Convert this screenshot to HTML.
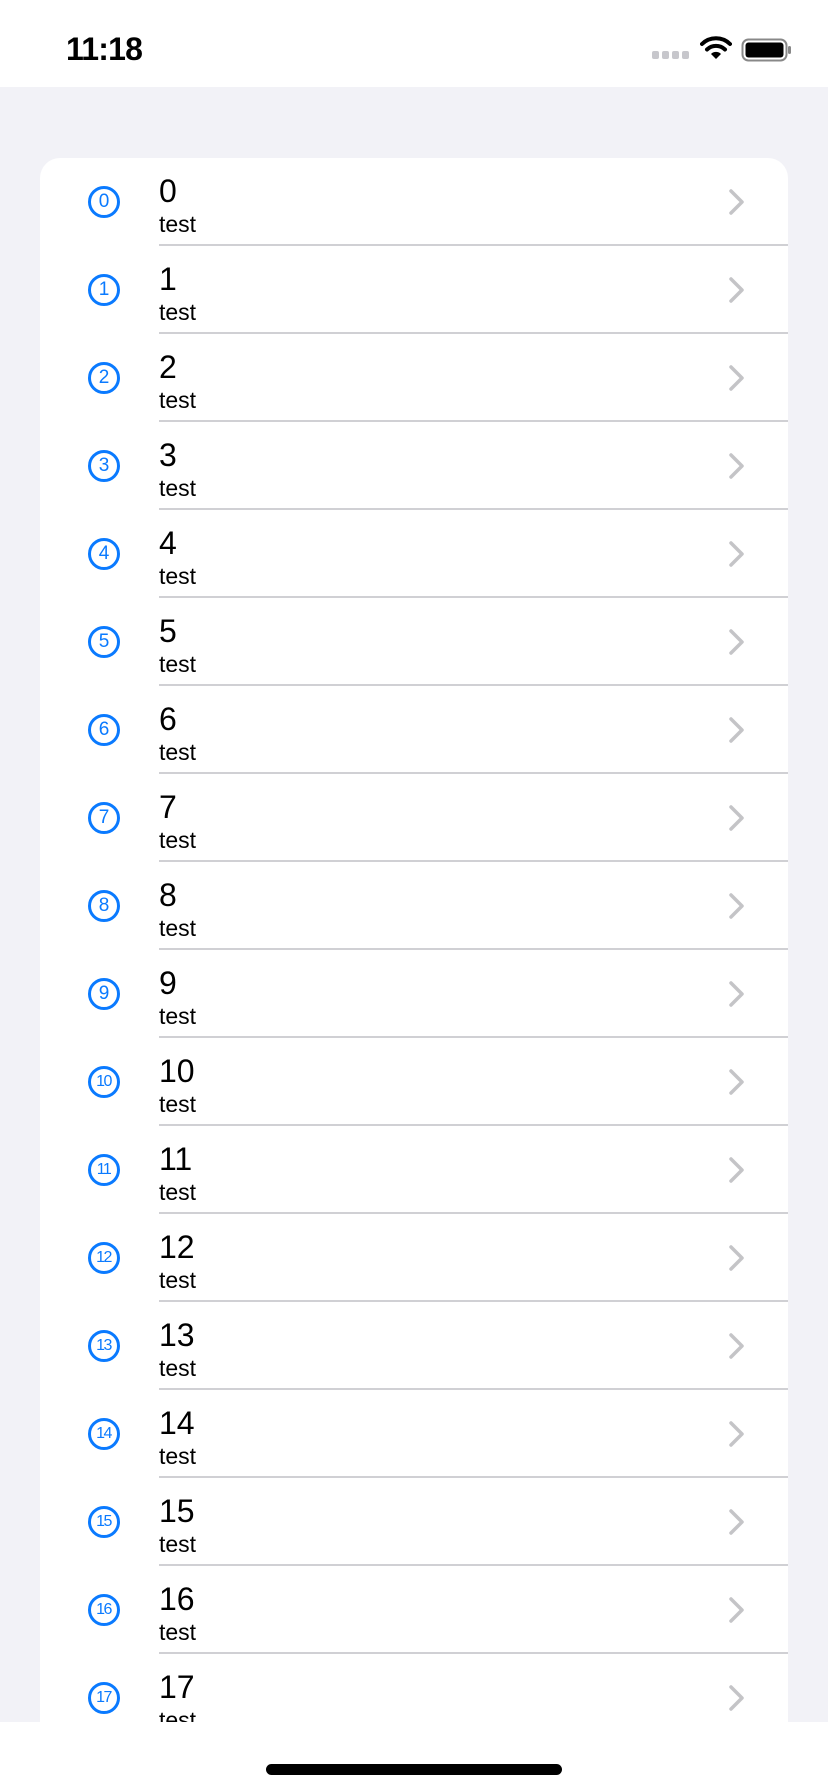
<!DOCTYPE html>
<html><head><meta charset="utf-8"><style>
*{margin:0;padding:0;box-sizing:border-box}
body{width:828px;height:1792px;overflow:hidden;background:#f2f2f7;font-family:"Liberation Sans",sans-serif;position:relative}
.sb{position:absolute;left:0;top:0;width:828px;height:87px;background:#fff}
.time{position:absolute;left:66px;top:31px;font-size:32px;font-weight:bold;letter-spacing:-0.8px}
.card{position:absolute;left:40px;top:158px;width:748px;height:1564px;background:#fff;border-radius:20px 20px 0 0;overflow:hidden}
.row{position:absolute;left:0;width:748px;height:88px}
.ic{position:absolute;left:48px;top:28px;width:32px;height:32px;border:3px solid #0a7aff;border-radius:50%;color:#0a7aff;font-size:19px;text-align:center;line-height:26px}
.ic.s{font-size:16px;letter-spacing:-1.5px;text-indent:-1px}
.t{position:absolute;left:119px;top:15px;font-size:32px;color:#000}
.st{position:absolute;left:119px;top:53px;font-size:23px;color:#000}
.sep{position:absolute;left:119px;right:0;bottom:0;height:2px;background:#d0d0d4}
.ch{position:absolute;left:688px;top:31px}
.bot{position:absolute;left:0;top:1722px;width:828px;height:70px;background:#fff}
.home{position:absolute;left:266px;top:1764px;width:296px;height:11px;border-radius:6px;background:#000}
</style></head><body>
<div class="sb">
<div class="time">11:18</div>
<svg style="position:absolute;left:652px;top:50px" width="40" height="10"><rect x="0" y="1" width="7" height="8" rx="2" fill="#c7c7cc"/><rect x="10" y="1" width="7" height="8" rx="2" fill="#c7c7cc"/><rect x="20" y="1" width="7" height="8" rx="2" fill="#c7c7cc"/><rect x="30" y="1" width="7" height="8" rx="2" fill="#c7c7cc"/></svg>
<svg style="position:absolute;left:700px;top:36px" width="32" height="24" viewBox="0 0 32 24"><path d="M2 8 A20 20 0 0 1 30 8" stroke="#000" stroke-width="4" fill="none" stroke-linecap="round"/><path d="M7 13.5 A13 13 0 0 1 25 13.5" stroke="#000" stroke-width="4" fill="none" stroke-linecap="round"/><path d="M11 18 L16 23 L21 18 A7 7 0 0 0 11 18Z" fill="#000"/></svg>
<svg style="position:absolute;left:741px;top:38px" width="52" height="24"><rect x="1.5" y="1.5" width="44" height="21" rx="6" fill="none" stroke="#888" stroke-width="2"/><rect x="4.5" y="4.5" width="38" height="15" rx="3" fill="#000"/><rect x="47" y="8" width="3" height="8" rx="1.5" fill="#888"/></svg>
</div>
<div class="card">
<div class="row" style="top:0"><div class="ic">0</div><div class="t">0</div><div class="st">test</div><svg class="ch" width="18" height="26"><path d="M3 2 L14 13 L3 24" stroke="#c4c4c7" stroke-width="3.5" fill="none" stroke-linecap="round" stroke-linejoin="round"/></svg><div class="sep"></div></div>
<div class="row" style="top:88px"><div class="ic">1</div><div class="t">1</div><div class="st">test</div><svg class="ch" width="18" height="26"><path d="M3 2 L14 13 L3 24" stroke="#c4c4c7" stroke-width="3.5" fill="none" stroke-linecap="round" stroke-linejoin="round"/></svg><div class="sep"></div></div>
<div class="row" style="top:176px"><div class="ic">2</div><div class="t">2</div><div class="st">test</div><svg class="ch" width="18" height="26"><path d="M3 2 L14 13 L3 24" stroke="#c4c4c7" stroke-width="3.5" fill="none" stroke-linecap="round" stroke-linejoin="round"/></svg><div class="sep"></div></div>
<div class="row" style="top:264px"><div class="ic">3</div><div class="t">3</div><div class="st">test</div><svg class="ch" width="18" height="26"><path d="M3 2 L14 13 L3 24" stroke="#c4c4c7" stroke-width="3.5" fill="none" stroke-linecap="round" stroke-linejoin="round"/></svg><div class="sep"></div></div>
<div class="row" style="top:352px"><div class="ic">4</div><div class="t">4</div><div class="st">test</div><svg class="ch" width="18" height="26"><path d="M3 2 L14 13 L3 24" stroke="#c4c4c7" stroke-width="3.5" fill="none" stroke-linecap="round" stroke-linejoin="round"/></svg><div class="sep"></div></div>
<div class="row" style="top:440px"><div class="ic">5</div><div class="t">5</div><div class="st">test</div><svg class="ch" width="18" height="26"><path d="M3 2 L14 13 L3 24" stroke="#c4c4c7" stroke-width="3.5" fill="none" stroke-linecap="round" stroke-linejoin="round"/></svg><div class="sep"></div></div>
<div class="row" style="top:528px"><div class="ic">6</div><div class="t">6</div><div class="st">test</div><svg class="ch" width="18" height="26"><path d="M3 2 L14 13 L3 24" stroke="#c4c4c7" stroke-width="3.5" fill="none" stroke-linecap="round" stroke-linejoin="round"/></svg><div class="sep"></div></div>
<div class="row" style="top:616px"><div class="ic">7</div><div class="t">7</div><div class="st">test</div><svg class="ch" width="18" height="26"><path d="M3 2 L14 13 L3 24" stroke="#c4c4c7" stroke-width="3.5" fill="none" stroke-linecap="round" stroke-linejoin="round"/></svg><div class="sep"></div></div>
<div class="row" style="top:704px"><div class="ic">8</div><div class="t">8</div><div class="st">test</div><svg class="ch" width="18" height="26"><path d="M3 2 L14 13 L3 24" stroke="#c4c4c7" stroke-width="3.5" fill="none" stroke-linecap="round" stroke-linejoin="round"/></svg><div class="sep"></div></div>
<div class="row" style="top:792px"><div class="ic">9</div><div class="t">9</div><div class="st">test</div><svg class="ch" width="18" height="26"><path d="M3 2 L14 13 L3 24" stroke="#c4c4c7" stroke-width="3.5" fill="none" stroke-linecap="round" stroke-linejoin="round"/></svg><div class="sep"></div></div>
<div class="row" style="top:880px"><div class="ic s">10</div><div class="t">10</div><div class="st">test</div><svg class="ch" width="18" height="26"><path d="M3 2 L14 13 L3 24" stroke="#c4c4c7" stroke-width="3.5" fill="none" stroke-linecap="round" stroke-linejoin="round"/></svg><div class="sep"></div></div>
<div class="row" style="top:968px"><div class="ic s">11</div><div class="t">11</div><div class="st">test</div><svg class="ch" width="18" height="26"><path d="M3 2 L14 13 L3 24" stroke="#c4c4c7" stroke-width="3.5" fill="none" stroke-linecap="round" stroke-linejoin="round"/></svg><div class="sep"></div></div>
<div class="row" style="top:1056px"><div class="ic s">12</div><div class="t">12</div><div class="st">test</div><svg class="ch" width="18" height="26"><path d="M3 2 L14 13 L3 24" stroke="#c4c4c7" stroke-width="3.5" fill="none" stroke-linecap="round" stroke-linejoin="round"/></svg><div class="sep"></div></div>
<div class="row" style="top:1144px"><div class="ic s">13</div><div class="t">13</div><div class="st">test</div><svg class="ch" width="18" height="26"><path d="M3 2 L14 13 L3 24" stroke="#c4c4c7" stroke-width="3.5" fill="none" stroke-linecap="round" stroke-linejoin="round"/></svg><div class="sep"></div></div>
<div class="row" style="top:1232px"><div class="ic s">14</div><div class="t">14</div><div class="st">test</div><svg class="ch" width="18" height="26"><path d="M3 2 L14 13 L3 24" stroke="#c4c4c7" stroke-width="3.5" fill="none" stroke-linecap="round" stroke-linejoin="round"/></svg><div class="sep"></div></div>
<div class="row" style="top:1320px"><div class="ic s">15</div><div class="t">15</div><div class="st">test</div><svg class="ch" width="18" height="26"><path d="M3 2 L14 13 L3 24" stroke="#c4c4c7" stroke-width="3.5" fill="none" stroke-linecap="round" stroke-linejoin="round"/></svg><div class="sep"></div></div>
<div class="row" style="top:1408px"><div class="ic s">16</div><div class="t">16</div><div class="st">test</div><svg class="ch" width="18" height="26"><path d="M3 2 L14 13 L3 24" stroke="#c4c4c7" stroke-width="3.5" fill="none" stroke-linecap="round" stroke-linejoin="round"/></svg><div class="sep"></div></div>
<div class="row" style="top:1496px"><div class="ic s">17</div><div class="t">17</div><div class="st">test</div><svg class="ch" width="18" height="26"><path d="M3 2 L14 13 L3 24" stroke="#c4c4c7" stroke-width="3.5" fill="none" stroke-linecap="round" stroke-linejoin="round"/></svg><div class="sep"></div></div>
</div>
<div class="bot"></div>
<div class="home"></div>
</body></html>
